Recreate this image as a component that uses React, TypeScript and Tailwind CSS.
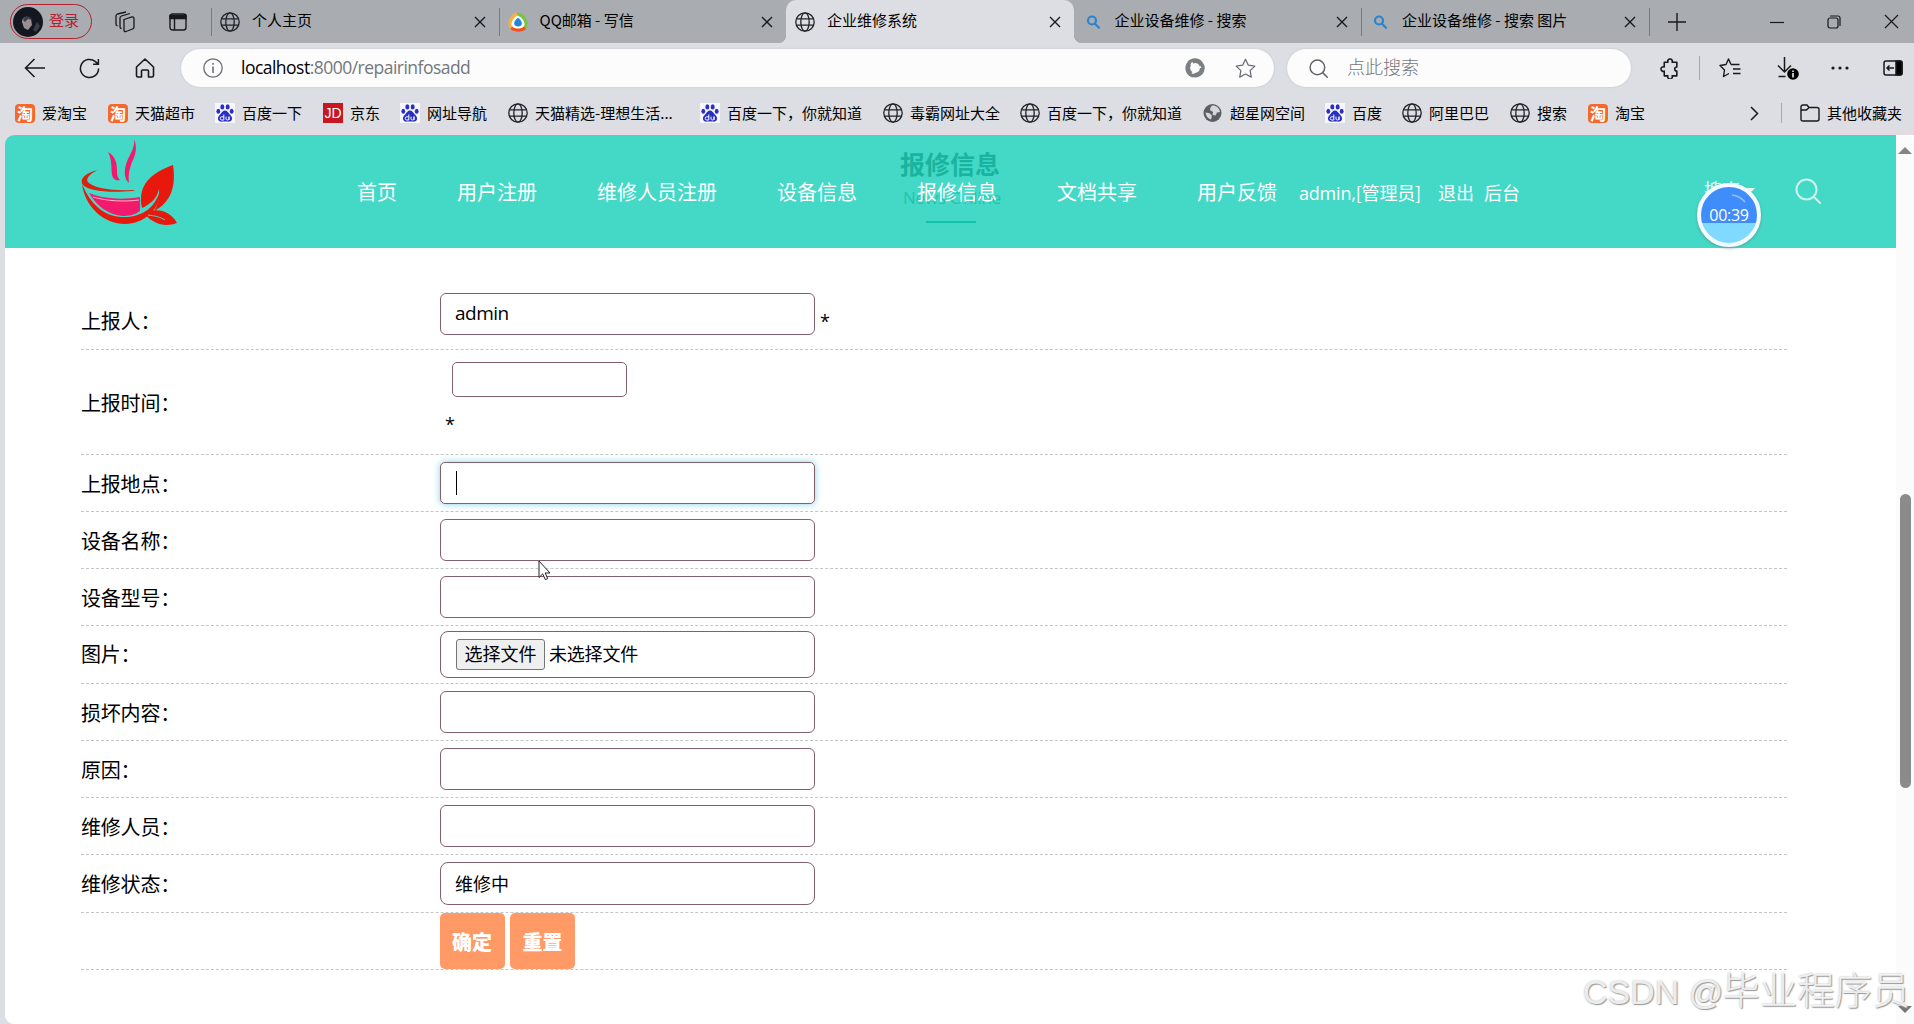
import { FC, ReactNode } from 'react'

type IconProps = { className?: string }

const Globe: FC<IconProps> = ({ className = '' }) => (
  <svg className={`h-5 w-5 shrink-0 ${className}`} viewBox="0 0 20 20" fill="none" stroke="#1f2226" strokeWidth="1.3">
    <circle cx="10" cy="10" r="9.2" />
    <ellipse cx="10" cy="10" rx="4.2" ry="9.2" />
    <path d="M1.8 6.8h16.4M1.8 13.2h16.4" />
  </svg>
)

const GreyGlobe: FC = () => (
  <svg className="h-5 w-5 shrink-0" viewBox="0 0 20 20">
    <circle cx="9.500" cy="10" r="9" fill="#5b5e62" />
    <path d="M9 2.500c4-.3 7.500 2.500 8 6.500l-3 .5-1.500 3-3-.5.5-3-3-2 .5-2.500zM2.600 9.600l4 .6 2.400 2.600-1 3.600c-3-.8-5.200-3.400-5.400-6.800z" fill="#d5d7da" />
  </svg>
)

const Taobao: FC = () => (
  <span className="flex h-[19px] w-5 shrink-0 items-center justify-center rounded-[4px] bg-[#f4682c] text-[16px] leading-none font-bold text-white">
    淘
  </span>
)

const Baidu: FC = () => (
  <svg className="h-5 w-5 shrink-0" viewBox="0 0 20 20">
    <rect width="20" height="20" fill="#f6f7fc" />
    <g fill="#2a2fc4">
      <ellipse cx="7.3" cy="3.9" rx="2" ry="2.7" />
      <ellipse cx="12.7" cy="3.9" rx="2" ry="2.7" />
      <ellipse cx="3.3" cy="8.2" rx="1.9" ry="2.5" />
      <ellipse cx="16.7" cy="8.2" rx="1.9" ry="2.5" />
      <path d="M10 7.6c2.2 0 3 2 4.6 3.6 1.8 1.8 2.8 3 2.4 5-.4 1.8-2 2.6-3.8 2.4-2.2-.2-4.2-.2-6.4 0-1.8.2-3.4-.6-3.8-2.4-.4-2 .6-3.2 2.4-5C7 9.6 7.8 7.6 10 7.6z" />
    </g>
    <path d="M8.800 11.500v5.500h-2a1.500 1.500 0 0 1 0-3.200h2M11 13.600v2.600c0 1 3 1 3 0v-2.600 3.400" fill="none" stroke="#fff" strokeWidth="1" />
  </svg>
)

const Jd: FC = () => (
  <span className="flex h-5 w-5 shrink-0 items-center justify-center bg-[#c81623] font-['Liberation_Sans'] text-[14px] leading-none text-white">
    JD
  </span>
)

const QQMail: FC = () => (
  <svg className="h-5 w-5 shrink-0" viewBox="0 0 20 20">
    <path d="M9 .5C4 2 .5 7 .5 12c0 2.500.8 4.500 2 5.800L9 9z" fill="#fbb03b" />
    <path d="M9 .5c5 0 9 4 10.500 9.500.5 3-.5 5.500-2 7L9 5z" fill="#7cc142" />
    <path d="M2.500 17c4 3.500 11.500 3.500 15.500 0l-3-4H5z" fill="#f1501f" />
    <path d="M9.500 3.500c4 1.500 7 5.500 7 9 0 2.500-3 4-6.500 4s-6.500-1.500-6.500-4c0-3.500 2.500-7.500 6-9z" fill="#fff" />
    <path d="M10 5.800c2.500 1.500 3.800 3.700 3.800 5.700 0 2-1.700 3-3.800 3s-3.800-1-3.800-3c0-2 1.300-4.200 3.800-5.700z" fill="#1e88d8" />
  </svg>
)

const BlueSearch: FC = () => (
  <svg className="h-4 w-4 shrink-0" viewBox="0 0 16 16" fill="none" stroke="#2a83cf" strokeWidth="2.2" strokeLinecap="round">
    <circle cx="7" cy="6.5" r="4" />
    <path d="M10 9.700l4 4" />
  </svg>
)

const Swirl: FC<IconProps> = ({ className = '' }) => (
  <svg className={`h-5 w-5 shrink-0 ${className}`} viewBox="0 0 20 20" fill="#7b7e82">
    <path d="M2.500 4C6-.5 13-1 17 3.500c3 3.500 3 8 .5 11.500C17.500 9 14 4.500 8.500 4 6 3.700 4 3.800 2.500 4z" />
    <path d="M2.500 4C6-.5 13-1 17 3.500c3 3.500 3 8 .5 11.500C17.500 9 14 4.500 8.500 4 6 3.700 4 3.800 2.500 4z" transform="rotate(120 10 10)" />
    <path d="M2.500 4C6-.5 13-1 17 3.500c3 3.500 3 8 .5 11.500C17.500 9 14 4.500 8.500 4 6 3.700 4 3.800 2.500 4z" transform="rotate(240 10 10)" />
    <circle cx="10" cy="10" r="6" fill="none" stroke="#7b7e82" strokeWidth="2.200" strokeDasharray="9.500 3.060" />
  </svg>
)

const Close: FC = () => (
  <svg className="h-3 w-3 shrink-0" viewBox="0 0 12 12" stroke="#17191c" strokeWidth="1.4">
    <path d="M1 1l10 10M11 1L1 11" />
  </svg>
)

const Magnifier: FC<IconProps> = ({ className = '' }) => (
  <svg className={className} viewBox="0 0 26 26" fill="none" stroke="currentColor" strokeWidth="2" strokeLinecap="round">
    <circle cx="11.500" cy="11.500" r="10" />
    <path d="M19 19l6 6" />
  </svg>
)

const Logo: FC = () => (
  <svg className="h-[90px] w-[98px] overflow-visible" viewBox="0 0 98 90">
    <path d="M53 0c4 9 1 17-2 23-3 8-4 14-3 21-6-5-5-15-1-24 4-8 7-13 6-20z" fill="#f31a6e" />
    <path d="M27 13c9 5 9 14 9 20 0 4 1 6 3 8-5 1-7-1-8-5-1-8 0-16-4-23z" fill="#f31a6e" />
    <path d="M17 31C3 34-2 41 2 46c6 6 24 8 50 6 2 0 2-1 0-1-22 1-38-2-44-7-5-4 2-10 9-13z" fill="#d8230f" />
    <path d="M8 54c14 6 34 7 51 4v14c-5 4-11 5-18 5C26 75 16 67 8 54z" fill="#f31a6e" />
    <path d="M12 58c14 4 30 5 46 3" fill="none" stroke="#ffb3c8" strokeWidth="1" />
    <path d="M1 45c9 21 22 32 40 33 20 1 34-10 38-27 1 19-16 34-35 34C23 85 4 68 1 45z" fill="#e8190c" />
    <path d="M92 26c3 20-1 37-19 46 4-7 6-13 5-22-2 9-8 15-17 19-5-23 9-35 31-43z" fill="#e8190c" />
    <path d="M64 75c9-7 25-4 32 9-11 4-23 2-32-9z" fill="#e8190c" />
    <path d="M67 76c8 1 12 2 17 5" fill="none" stroke="#43d9c6" strokeWidth="1" />
  </svg>
)

const tabs: { title: string; icon: ReactNode; active?: boolean }[] = [
  { title: '个人主页', icon: <Globe /> },
  { title: 'QQ邮箱 - 写信', icon: <QQMail /> },
  { title: '企业维修系统', icon: <Globe />, active: true },
  { title: '企业设备维修 - 搜索', icon: <BlueSearch /> },
  { title: '企业设备维修 - 搜索 图片', icon: <BlueSearch /> },
]

const bookmarks: { title: string; icon: ReactNode; width: string }[] = [
  { title: '爱淘宝', icon: <Taobao />, width: 'w-[93px]' },
  { title: '天猫超市', icon: <Taobao />, width: 'w-[107px]' },
  { title: '百度一下', icon: <Baidu />, width: 'w-[108px]' },
  { title: '京东', icon: <Jd />, width: 'w-[77px]' },
  { title: '网址导航', icon: <Baidu />, width: 'w-[108px]' },
  { title: '天猫精选-理想生活...', icon: <Globe />, width: 'w-[192px]' },
  { title: '百度一下，你就知道', icon: <Baidu />, width: 'w-[183px]' },
  { title: '毒霸网址大全', icon: <Globe />, width: 'w-[137px]' },
  { title: '百度一下，你就知道', icon: <Globe />, width: 'w-[183px]' },
  { title: '超星网空间', icon: <GreyGlobe />, width: 'w-[122px]' },
  { title: '百度', icon: <Baidu />, width: 'w-[77px]' },
  { title: '阿里巴巴', icon: <Globe />, width: 'w-[108px]' },
  { title: '搜索', icon: <Globe />, width: 'w-[78px]' },
  { title: '淘宝', icon: <Taobao />, width: 'w-[90px]' },
]

const TabStrip: FC = () => (
  <div className="flex h-[43px] shrink-0 items-center bg-[#a9adb1] text-[15px]">
    <div className="ml-[10px] flex h-[35px] w-[82px] shrink-0 items-center rounded-full border-[1.5px] border-[#b3202f] pl-[2px] text-[#b3202f]">
      <svg className="mr-[6px] h-[30px] w-[30px]" viewBox="0 0 30 30">
        <circle cx="15" cy="15" r="15" fill="#14171f" />
        <path d="M9 15c0-5 6-7 9-3l1 6-4 5-4-2z" fill="#9c8f92" />
        <path d="M10 13c2-5 7-4 9 0l-4-1-3 3zM24 15l3 4-4 6-3-2z" fill="#3b3d4a" />
      </svg>
      <span className="pb-[2px]">登录</span>
    </div>
    <svg className="ml-[22px] h-[22px] w-[22px] shrink-0" viewBox="0 0 22 22" fill="none" stroke="#17191c" strokeWidth="1.3">
      <path d="M10 8.500l8-2.500q2-.4 2 1.500v8.500q0 1.500-1.500 2l-6.500 2.500q-2 .5-2-1.500z" />
      <path d="M7.500 17.500q-1.500 0-1.500-2V7q0-1.500 1.500-2L16 2.500M3.500 15Q2 14.500 2 13V5q0-1.500 1.500-2L12 1" />
    </svg>
    <svg className="ml-[33px] h-[18px] w-[18px] shrink-0" viewBox="0 0 18 18" fill="none" stroke="#17191c" strokeWidth="1.4">
      <rect x="1" y="1" width="16" height="16" rx="2.500" />
      <path d="M1 2.500h16v3H1z" fill="#17191c" />
      <path d="M5.500 5v12" />
    </svg>
    <div className="ml-[24px] flex h-full">
      {tabs.map((tab, i) => (
        <div
          key={i}
          className={`relative flex h-full w-[287.5px] items-center ${tab.active ? 'rounded-t-[10px] bg-[#dcdee3]' : ''}`}
        >
          {tab.active && (
            <>
              <div className="absolute bottom-0 -left-2 h-2 w-2 bg-[radial-gradient(circle_at_0_0,transparent_8px,#dcdee3_8.5px)]" />
              <div className="absolute -right-2 bottom-0 h-2 w-2 bg-[radial-gradient(circle_at_100%_0,transparent_8px,#dcdee3_8.5px)]" />
            </>
          )}
          <div className={`h-[28px] w-px ${tab.active || i === 3 ? '' : 'bg-[#777b80]'}`} />
          <div className="mr-[12px] ml-[8px] flex w-5 justify-center">{tab.icon}</div>
          <div className="flex-1 pb-[2px] whitespace-nowrap text-black">{tab.title}</div>
          <div className="mr-[13px]">
            <Close />
          </div>
        </div>
      ))}
      <div className="h-[28px] w-px self-center bg-[#777b80]" />
    </div>
    <svg className="ml-[18px] h-[18px] w-[18px] shrink-0" viewBox="0 0 18 18" stroke="#17191c" strokeWidth="1.4">
      <path d="M9 0v18M0 9h18" />
    </svg>
    <div className="ml-auto flex items-center gap-[43px] pr-[15px]">
      <svg className="h-[14px] w-[14px]" viewBox="0 0 14 14" stroke="#17191c" strokeWidth="1.2">
        <path d="M0 7.500h14" />
      </svg>
      <svg className="h-[14px] w-[14px]" viewBox="0 0 14 14" fill="none" stroke="#17191c" strokeWidth="1.2">
        <rect x="1" y="3" width="10" height="10" rx="2" />
        <path d="M3 1h8q2 0 2 2v8" />
      </svg>
      <svg className="h-[15px] w-[15px]" viewBox="0 0 15 15" stroke="#17191c" strokeWidth="1.2">
        <path d="M1 1l13 13M14 1L1 14" />
      </svg>
    </div>
  </div>
)

const Toolbar: FC = () => (
  <div className="flex h-[50px] shrink-0 items-center text-[#17191c]">
    <svg className="ml-[24px] h-5 w-[21px]" viewBox="0 0 21 20" fill="none" stroke="currentColor" strokeWidth="1.5">
      <path d="M21 10H2M10.500 1L1.500 10l9 9" />
    </svg>
    <svg className="ml-[34px] h-[21px] w-[21px]" viewBox="0 0 22 22" fill="none" stroke="currentColor" strokeWidth="1.6">
      <path d="M20.500 11a9.500 9.500 0 1 1-3.300-7.200l2.800 2.400M20.300 1v5.500h-5.500" />
    </svg>
    <svg className="ml-[35px] h-5 w-5" viewBox="0 0 20 20" fill="none" stroke="currentColor" strokeWidth="1.6" strokeLinejoin="round">
      <path d="M1.500 9L10 1l8.500 8v8.500q0 1.500-1.500 1.500h-3.500v-6q0-1-1-1h-5q-1 0-1 1v6H3q-1.500 0-1.500-1.500z" />
    </svg>
    <div className="ml-[26px] flex h-[38px] w-[1093px] items-center rounded-full bg-[#fcfcfd] shadow-[0_0_2px_#b9bbc0]">
      <svg className="ml-[22px] h-5 w-5" viewBox="0 0 20 20" fill="none" stroke="#6b6e73" strokeWidth="1.3">
        <circle cx="10" cy="10" r="9.200" />
        <path d="M10 8.500V15M10 5v1.700" strokeWidth="1.6" />
      </svg>
      <div className="ml-[18px] flex-1 pb-px font-['Open_Sans',sans-serif] text-[17.5px] tracking-[-0.52px] text-[#74777b]">
        <span className="text-black">localhost</span>:8000/repairinfosadd
      </div>
      <Swirl className="mr-[30px]" />
      <svg className="mr-[18px] h-[21px] w-[21px]" viewBox="0 0 20 20" fill="none" stroke="#6b6e73" strokeWidth="1.2" strokeLinejoin="round">
        <path d="M10 1.200l2.700 5.700 6.200.8-4.500 4.300 1.100 6.200L10 15.200l-5.500 3 1.100-6.200L1.100 7.700l6.200-.8z" />
      </svg>
    </div>
    <div className="ml-[13px] flex h-[38px] w-[344px] items-center rounded-full bg-[#fcfcfd] text-[18px] text-[#74777b] shadow-[0_0_2px_#b9bbc0]">
      <Magnifier className="mr-[19px] ml-[22px] h-[19px] w-[19px] text-[#5f6267]" />
      <span className="pb-[3px] font-light">点此搜索</span>
    </div>
    <svg className="ml-[28px] h-[21px] w-[21px]" viewBox="0 0 20 20" fill="none" stroke="currentColor" strokeWidth="1.5" strokeLinejoin="round">
      <path d="M5 4h3.500a2.200 2.200 0 1 1 4 0H17v4.500a1.800 1.800 0 0 0 0 4V17h-4.500a2.200 2.200 0 1 1-4 0H5v-4.500a2.200 2.200 0 1 1 0-4z" />
    </svg>
    <div className="ml-[19px] h-[24px] w-px bg-[#a5a8ac]" />
    <svg className="ml-[19px] h-5 w-[22px]" viewBox="0 0 22 20" fill="none" stroke="currentColor" strokeWidth="1.4" strokeLinejoin="round">
      <path d="M12 6.500h8.500M14 11h7.500M14 15.500h7.500M12 6.500L9.500 1 7 6.500l-6 1L5.500 12l-1 6.500L10 15.500" />
    </svg>
    <svg className="ml-[36px] h-[24px] w-[23px]" viewBox="0 0 23 24" fill="none" stroke="currentColor" strokeWidth="1.5">
      <path d="M7.500 1v15M1 9.500l6.500 6.500L14 9.500M1.500 20.500h7" />
      <circle cx="16" cy="18" r="5.800" fill="#000" stroke="none" />
      <path d="M16 14.500v1.500M16 17v4.500" stroke="#fff" />
    </svg>
    <svg className="ml-[31px] h-1 w-[18px]" viewBox="0 0 18 4" fill="currentColor">
      <circle cx="2" cy="2" r="1.600" />
      <circle cx="9" cy="2" r="1.600" />
      <circle cx="16" cy="2" r="1.600" />
    </svg>
    <svg className="ml-[34px] h-[16px] w-5 shrink-0" viewBox="0 0 20 16" fill="none" stroke="currentColor" strokeWidth="1.5">
      <rect x="1" y="1" width="18" height="14" rx="2" />
      <path d="M13 1h4q2 0 2 2v10q0 2-2 2h-4z" fill="#000" />
      <path d="M11 8H4M6.500 5.500L4 8l2.500 2.500" />
    </svg>
  </div>
)

const BookmarkBar: FC = () => (
  <div className="flex h-[37px] shrink-0 items-center pt-[3px] pl-[15px] text-[15px] text-black">
    {bookmarks.map((item, i) => (
      <div key={i} className={`flex shrink-0 items-center gap-[7px] whitespace-nowrap ${item.width}`}>
        {item.icon}
        {item.title}
      </div>
    ))}
    <svg className="ml-[72px] h-[15px] w-[9px]" viewBox="0 0 9 15" fill="none" stroke="#17191c" strokeWidth="1.5">
      <path d="M1 1l6.500 6.500L1 14" />
    </svg>
    <div className="ml-[22px] h-[20px] w-px bg-[#a5a8ac]" />
    <svg className="ml-[18px] h-[18px] w-5 shrink-0" viewBox="0 0 20 18" fill="none" stroke="#17191c" strokeWidth="1.4">
      <path d="M1 3q0-2 2-2h4l2 2.500h8q2 0 2 2V15q0 2-2 2H3q-2 0-2-2zM1 6h5.500L9 3.500" />
    </svg>
    <div className="ml-[7px] whitespace-nowrap">其他收藏夹</div>
  </div>
)

const SiteHeader: FC = () => (
  <header className="relative flex h-[113px] shrink-0 bg-[#43d9c6] text-white">
    {/* page title that shows through the fixed header */}
    <div className="absolute top-[9px] left-[895px] text-[25px] leading-[38px] font-bold text-[#1ab39f]">报修信息</div>
    <div className="absolute top-[49px] left-[898px] font-['Open_Sans',sans-serif] text-[17px] leading-[28px] tracking-[-0.2px] text-[#25c3ae]">
      News Online
    </div>
    <div className="absolute top-[86px] left-[921px] h-[2px] w-[50px] bg-[#12c3ab]" />
    <div className="mt-[4px] ml-[76px] w-[98px]">
      <Logo />
    </div>
    <nav className="relative ml-[178px] flex h-[113px] items-center gap-[60px] text-[20px] whitespace-nowrap">
      <a>首页</a>
      <a>用户注册</a>
      <a>维修人员注册</a>
      <a>设备信息</a>
      <a>报修信息</a>
      <a>文档共享</a>
      <a>用户反馈</a>
    </nav>
    <div className="ml-[22px] flex h-[115px] items-center text-[18px] whitespace-nowrap">
      <span className="w-[139px] tracking-[-0.2px]">
        <span className="font-['Open_Sans',sans-serif]">admin,</span>[管理员]
      </span>
      <span className="w-[46px]">退出</span>
      <span>后台</span>
    </div>
    <div className="mt-[41px] ml-[184px] flex h-[26px] items-center gap-[5px] text-[18px]">
      搜索
      <span className="mt-[3px] h-0 w-0 border-x-[5px] border-t-[5px] border-x-transparent border-t-white" />
    </div>
    <div className="absolute top-[48px] left-[1692px] flex h-[64px] w-[64px] items-center justify-center rounded-full border-4 border-[#f4faff] bg-linear-to-b from-[#3f8dfb] from-65% to-[#80d9ff] to-65% font-['Open_Sans',sans-serif] text-[16px] tracking-[-0.3px] shadow-[0_1px_3px_#5c9a9a]">
      00:39
      <svg className="absolute top-[6px] left-[30px] h-[12px] w-[18px]" viewBox="0 0 18 12" fill="none" stroke="#8fc0ff" strokeWidth="1.5">
        <path d="M1 2q8 1 13 7" />
      </svg>
    </div>
    <Magnifier className="absolute top-[43px] left-[1790px] h-[26px] w-[26px] text-[#c9f5ee]" />
  </header>
)

type RowProps = { label?: string; className?: string; labelClass?: string; children: ReactNode }

const Row: FC<RowProps> = ({ label, className = 'h-[57px] pt-[7px]', labelClass = 'pt-[8px]', children }) => (
  <div className={`flex border-b border-dashed border-[#c4c6c6] ${className}`}>
    <div className={`w-[359px] shrink-0 text-[20px] leading-[28px] tracking-[-0.2px] ${labelClass}`}>{label}</div>
    {children}
  </div>
)

type FieldProps = { className?: string; children?: ReactNode }

const Field: FC<FieldProps> = ({ className = 'h-[42px] rounded-[6px]', children }) => (
  <div className={`flex w-[375px] items-center border border-[#83606a] bg-white pl-[15px] text-[18px] ${className}`}>
    {children}
  </div>
)

const RepairForm: FC = () => (
  <div className="ml-[76px] w-[1706px] pt-[45px] text-black">
    <Row label="上报人：" className="h-[57px]" labelClass="pt-[14px]">
      <Field>
        <span className="-ml-px pb-[2px] font-['Open_Sans',sans-serif] text-[19px] tracking-[-0.5px]">admin</span>
      </Field>
      <span className="ml-[5px] pt-[15px] font-['Open_Sans',sans-serif] text-[18px]">*</span>
    </Row>
    <Row label="上报时间：" className="h-[105px] pt-[12px]" labelClass="pt-[27px]">
      <div>
        <div className="ml-[12px] h-[35px] w-[175px] rounded-[5px] border border-[#83606a]" />
        <div className="pt-[14px] pl-[5px] font-['Open_Sans',sans-serif] text-[18px]">*</div>
      </div>
    </Row>
    <Row label="上报地点：">
      <Field className="h-[42px] rounded-[5px] shadow-[0_0_7px_#7fd0e6]">
        <span className="h-6 w-px bg-black" />
      </Field>
    </Row>
    <Row label="设备名称：">
      <Field />
    </Row>
    <Row label="设备型号：">
      <Field />
    </Row>
    <Row label="图片：" className="h-[58px] pt-[5px]" labelClass="pt-[9px]">
      <Field className="h-[47px] rounded-[8px]">
        <span className="flex h-[31px] w-[89px] items-center justify-center rounded-[3px] border border-[#767676] bg-[#efefef] pb-[2px]">
          选择文件
        </span>
        <span className="ml-[4px] pb-[2px] tracking-[-0.2px]">未选择文件</span>
      </Field>
    </Row>
    <Row label="损坏内容：">
      <Field />
    </Row>
    <Row label="原因：">
      <Field />
    </Row>
    <Row label="维修人员：">
      <Field />
    </Row>
    <Row label="维修状态：" className="h-[58px] pt-[7px]">
      <Field className="h-[43px] rounded-[8px]">
        <span className="-ml-px pb-px">维修中</span>
      </Field>
    </Row>
    <Row className="h-[57px]">
      <button className="h-[56px] w-[65px] rounded-[5px] bg-[#ff9a66] pt-px pr-px text-[20px] font-black text-white">确定</button>
      <button className="ml-[5px] h-[56px] w-[65px] rounded-[5px] bg-[#ff9a66] pt-px text-[20px] font-black text-white">重置</button>
    </Row>
  </div>
)

const Scrollbar: FC = () => (
  <div className="flex w-[18px] shrink-0 flex-col items-center rounded-tr-[8px] bg-[#fbfbfb]">
    <div className="mt-[12px] h-0 w-0 border-x-[7px] border-b-[7px] border-x-transparent border-b-[#858585]" />
    <div className="mt-[340px] h-[294px] w-[11px] rounded-full bg-[#8b8b8b]" />
    <div className="mt-[218px] h-0 w-0 border-x-[7px] border-t-[7px] border-x-transparent border-t-[#757575]" />
  </div>
)

export default function App() {
  return (
    <div className="relative flex h-[1024px] w-[1914px] flex-col overflow-hidden bg-[#dcdee3] font-['Noto_Sans_CJK_SC',sans-serif]">
      <TabStrip />
      <Toolbar />
      <BookmarkBar />
      <div className="h-[5px] shrink-0 bg-[#e2dce2]" />
      <div className="ml-[5px] flex min-h-0 flex-1 overflow-hidden rounded-l-[9px] bg-white">
        <main className="flex w-[1891px] shrink-0 flex-col">
          <SiteHeader />
          <RepairForm />
        </main>
        <Scrollbar />
      </div>

      <svg className="absolute top-[560px] left-[538px] h-[21px] w-[14px]" viewBox="0 0 14 21">
        <path d="M1 1v16.500l3.700-3.600 2.600 5.700 2.400-1-2.500-5.600H12z" fill="#fff" stroke="#222" strokeWidth="1" />
      </svg>
      <div className="absolute top-[963px] left-[1583px] text-[37.5px] leading-[50px] font-light whitespace-nowrap text-white/80 [text-shadow:1px_1px_1px_#999,0_0_2px_#aaa]">
        <span className="mr-[-1px] font-['Liberation_Sans'] text-[34px]">CSDN @</span>毕业程序员
      </div>
    </div>
  )
}
